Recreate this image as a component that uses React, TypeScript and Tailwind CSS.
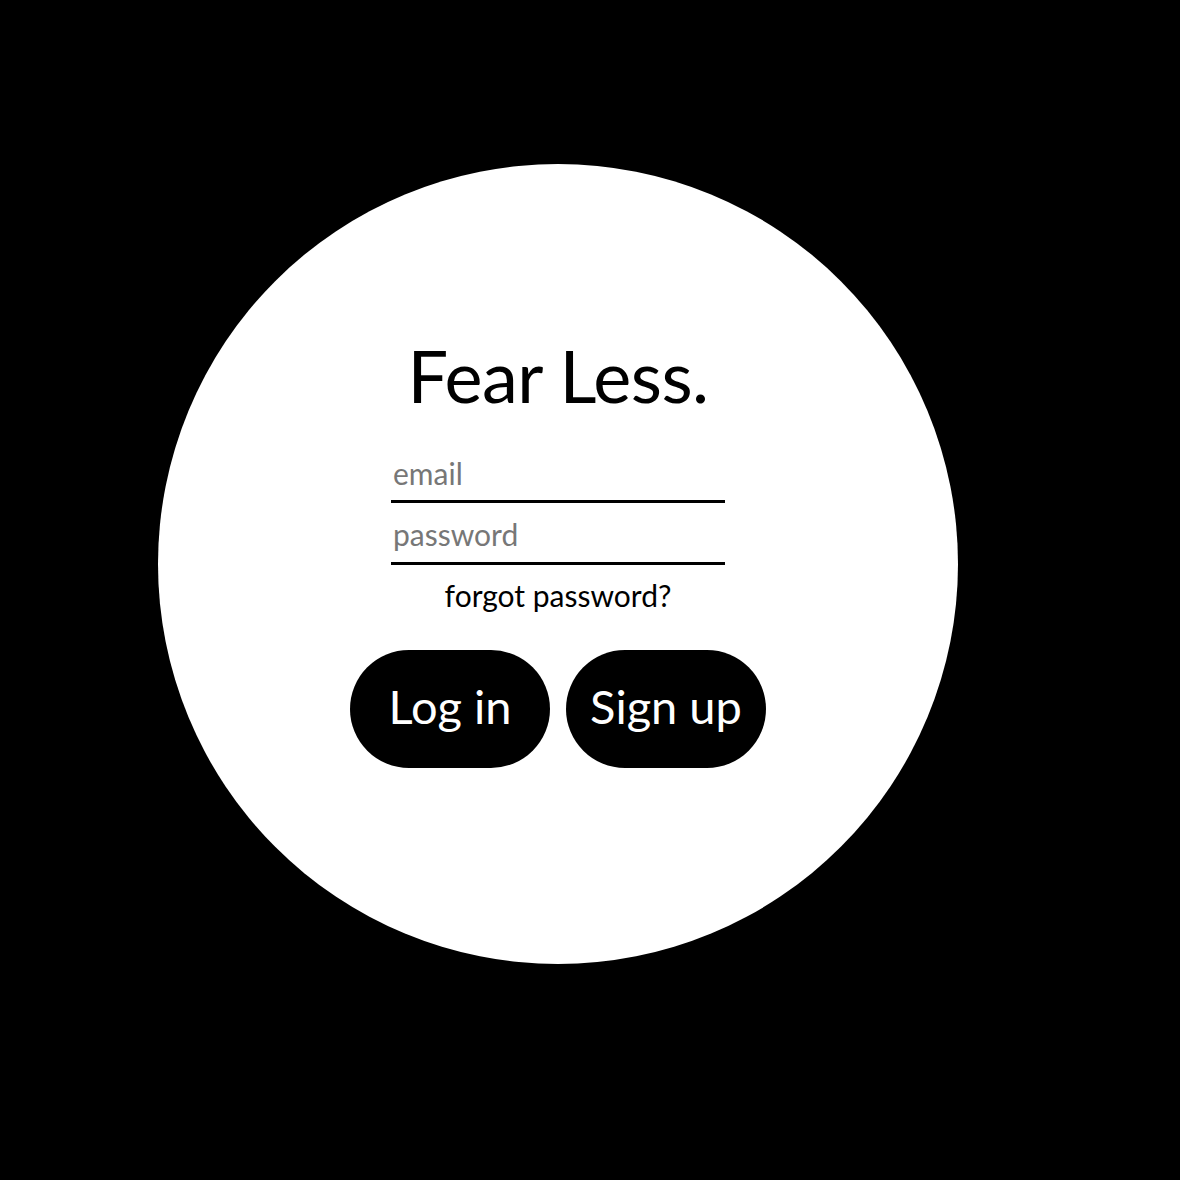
import React from 'react';

export default function App() {
    return (
        <div className="min-h-[1180px] w-full bg-black overflow-hidden" style={{ fontFamily: 'Lato, "Open Sans", sans-serif' }}>
            <div className="ml-[158px] pt-[164px]">
                {/* Circle card */}
                <div className="w-[800px] h-[800px] rounded-full bg-white flex flex-col items-center pt-[167px]">
                    <h1 className="text-[72px] leading-[88px] text-black font-normal tracking-[-0.5px]">Fear Less.</h1>

                    <div className="mt-[35px] w-[334px] flex flex-col">
                        <input
                            type="email"
                            placeholder="email"
                            className="h-[49px] w-full border-b-[3px] border-solid border-black bg-transparent px-[2px] pb-[8px] text-[30px] text-black placeholder:text-[#777] outline-none"
                        />
                        <input
                            type="password"
                            placeholder="password"
                            className="mt-[10px] h-[52px] w-full border-b-[3px] border-solid border-black bg-transparent px-[2px] pb-[8px] text-[30px] text-black placeholder:text-[#777] outline-none"
                        />
                    </div>

                    <a className="mt-[10px] text-[30px] leading-[40px] text-black cursor-pointer">forgot password?</a>

                    <div className="mt-[35px] flex gap-4">
                        <button className="w-[200px] h-[118px] rounded-full bg-black text-white text-[47px] pb-[6px]">Log in</button>
                        <button className="w-[200px] h-[118px] rounded-full bg-black text-white text-[47px] pb-[6px]">Sign up</button>
                    </div>
                </div>
            </div>
        </div>
    );
}
